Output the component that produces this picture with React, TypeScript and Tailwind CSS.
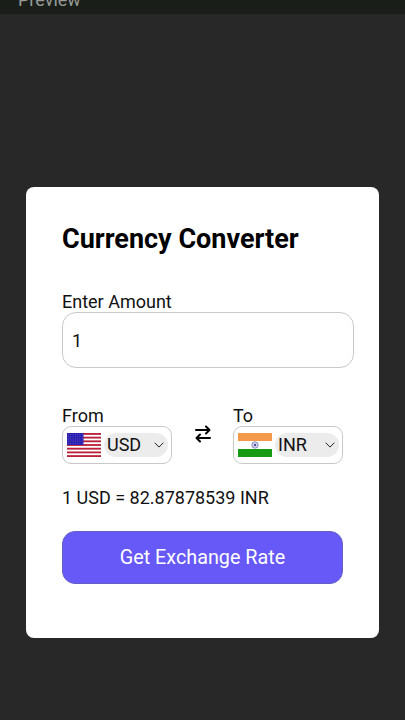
import { useState } from 'react';

const stripes = [0, 2, 4, 6, 8, 10, 12];
const starRows = [0, 1, 2, 3, 4, 5];
const starCols = [0, 1, 2, 3, 4, 5, 6];
const spokes = [0, 30, 60, 90, 120, 150];

function UsFlag() {
  return (
    <svg width="34" height="24" viewBox="0 0 34 26" preserveAspectRatio="none" className="shrink-0">
      <rect width="34" height="26" fill="#fff" />
      {stripes.map((row) => (
        <rect key={row} y={row * 2} width="34" height="2" fill="#b9213b" />
      ))}
      <rect width="16.5" height="13" fill="#2a1fb0" />
      {starRows.map((row) =>
        starCols.map((col) => (
          <circle key={`${row}-${col}`} cx={1.4 + col * 2.3} cy={1.5 + row * 2} r="0.4" fill="#8f8be0" />
        ))
      )}
    </svg>
  );
}

function IndiaFlag() {
  return (
    <svg width="34" height="24" viewBox="0 0 34 24" preserveAspectRatio="none" className="shrink-0">
      <rect width="34" height="24" fill="#fff" />
      <rect width="34" height="8" fill="#f2994a" />
      <rect y="16" width="34" height="8" fill="#169b12" />
      <circle cx="17" cy="12" r="3.2" fill="none" stroke="#5a5aa8" strokeWidth="0.7" />
      {spokes.map((angle) => (
        <path key={angle} d="M14 12h6" stroke="#5a5aa8" strokeWidth="0.3" transform={`rotate(${angle} 17 12)`} />
      ))}
      <circle cx="17" cy="12" r="1" fill="#3c3c98" />
    </svg>
  );
}

function CurrencySelect({ label, code, flag }: { label: string; code: string; flag: React.ReactNode }) {
  return (
    <div className="w-[110px]">
      <p className="h-[22px] text-[18px] leading-[24px]">{label}</p>
      <div className="flex h-[38px] items-center rounded-[9px] border border-[#c9c9c9] pl-[4px]">
        {flag}
        <button className="ml-[3px] flex h-[24px] w-[64px] items-center justify-between rounded-full bg-[#ececec] pl-[3px] pr-[4px] text-[18px] leading-[24px]">
          <span>{code}</span>
          <svg width="10" height="6" viewBox="0 0 10 6" fill="none" stroke="#222" strokeWidth="1">
            <path d="M0.6 0.7L5 5.1L9.4 0.7" />
          </svg>
        </button>
      </div>
    </div>
  );
}

export default function App() {
  const [amount, setAmount] = useState('1');

  return (
    <main className="flex h-[720px] w-[405px] flex-col overflow-hidden bg-[#282828] font-['Roboto',sans-serif] text-[#111]">
      <header className="h-[14px] shrink-0 bg-[#1a1e19] pl-[18px]">
        <p className="-mt-[11px] text-[18px] leading-[22px] text-[#969996]">Preview</p>
      </header>

      <section className="ml-[26px] mt-[173px] h-[451px] w-[353px] rounded-[8px] bg-white pl-[36px] pt-[36px]">
        <h2 className="text-[27px] font-bold leading-[32px] text-black">Currency Converter</h2>

        <div className="mt-[35px]">
          <label htmlFor="amount" className="block h-[22px] text-[18px] leading-[24px]">Enter Amount</label>
          <input
            id="amount"
            type="text"
            value={amount}
            onChange={(e) => setAmount(e.target.value)}
            className="block h-[56px] w-[292px] rounded-[14px] border border-[#c9c9c9] px-[9px] text-[18px] focus:outline-none"
          />
        </div>

        <div className="mt-[36px] flex w-[281px] justify-between">
          <CurrencySelect label="From" code="USD" flag={<UsFlag />} />
          <svg width="18" height="20" viewBox="0 0 18 20" fill="none" stroke="#000" strokeWidth="2" strokeLinecap="round" strokeLinejoin="round" className="mt-[20px]">
            <path d="M2 6H15.5M12 2.5L15.5 6L12 9.5" />
            <path d="M16 14H2.5M6 10.5L2.5 14L6 17.5" />
          </svg>
          <CurrencySelect label="To" code="INR" flag={<IndiaFlag />} />
        </div>

        <p className="mt-[22px] text-[18px] leading-[24px]">1 USD = 82.87878539 INR</p>

        <button className="mt-[21px] h-[53px] w-[281px] rounded-[13px] border border-[#655fc4] bg-[#6659f7] text-[19.8px] text-white">
          Get Exchange Rate
        </button>
      </section>
    </main>
  );
}
